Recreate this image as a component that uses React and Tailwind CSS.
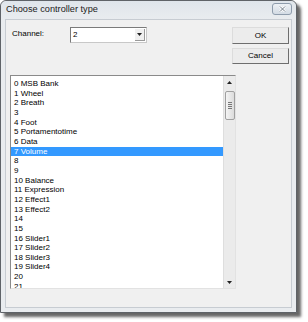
import React from "react";

const items = [
  "0 MSB Bank", "1 Wheel", "2 Breath", "3", "4 Foot", "5 Portamentotime", "6 Data",
  "7 Volume", "8", "9", "10 Balance", "11 Expression", "12 Effect1", "13 Effect2",
  "14", "15", "16 Slider1", "17 Slider2", "18 Slider3", "19 Slider4", "20", "21",
];

function Arrow({ up }) {
  return (
    <svg width="5" height="3" viewBox="0 0 5 3">
      <path d={up ? "M2.5 0 L5 3 L0 3 Z" : "M0 0 L5 0 L2.5 3 Z"} fill="#222" />
    </svg>
  );
}

export default function App() {
  const selected = 7;

  return (
    <div className="w-[308px] h-[322px] bg-white font-['Liberation_Sans',Arial,sans-serif] text-black">
      <div className="w-[297px] h-[313px] flex flex-col rounded-t-[6px] border border-[#5f6368] bg-[#e9ecef] shadow-[4px_4px_3px_rgba(0,0,0,0.6)]">
        {/* title bar */}
        <div className="h-[18px] flex items-center justify-between pl-[5px] pr-[4px] bg-gradient-to-b from-[#dfe5eb] to-[#e9ecef] rounded-t-[6px]">
          <span className="text-[9.2px] text-[#222] leading-none">Choose controller type</span>
          <div className="w-[20px] h-[12px] mt-[-2px] flex items-center justify-center rounded-[3px] border border-[#8e9cac] bg-gradient-to-b from-[#edf1f5] to-[#d3dbe4]">
            <svg width="7" height="6" viewBox="0 0 7 6">
              <path d="M1 0.5 L6 5.5 M6 0.5 L1 5.5" stroke="#fff" strokeWidth="2.4" />
              <path d="M1 0.5 L6 5.5 M6 0.5 L1 5.5" stroke="#6f7a86" strokeWidth="1" />
            </svg>
          </div>
        </div>

        {/* body */}
        <div className="flex-1 mx-[4px] mb-[4px] border border-[#c7ccd2] bg-[#f0f0f0] pt-[7px] pl-[4px] pr-[2px] flex flex-col">
          <div className="flex items-start">
            <div className="w-[60px] pl-[2px] pt-[2px] text-[8px] leading-[10px]">Channel:</div>
            <div className="w-[77px] h-[16px] flex items-center border border-[#7a7a7a] border-r-[#c8c8c8] border-b-[#c8c8c8] bg-white">
              <span className="flex-1 pl-[2px] text-[8px] leading-none">2</span>
              <div className="w-[10px] h-[12px] mr-[1px] flex items-center justify-center bg-[#f0f0f0] border-r border-b border-[#9a9a9a]">
                <Arrow />
              </div>
            </div>
            <div className="flex-1" />
            <div className="w-[57px] flex flex-col gap-[4px]">
              <div className="h-[17px] flex items-center justify-center border border-[#dcdcdc] border-r-[#6e6e6e] border-b-[#6e6e6e] bg-[#ececec] text-[8px]">OK</div>
              <div className="h-[16px] flex items-center justify-center border border-[#dcdcdc] border-r-[#6e6e6e] border-b-[#6e6e6e] bg-[#ececec] text-[8px]">Cancel</div>
            </div>
          </div>

          <div className="mt-[11px] w-[226px] h-[214px] flex border border-[#8a8a8a] border-r-[#e2e2e2] border-b-[#e2e2e2] bg-white">
            <div className="flex-1 overflow-hidden pt-[3px]">
              {items.map((t, i) => (
                <div
                  key={t}
                  className={
                    i === selected
                      ? "h-[9.67px] pl-[3px] text-[8px] leading-[9.67px] whitespace-nowrap bg-[#3399ff] text-white"
                      : "h-[9.67px] pl-[3px] text-[8px] leading-[9.67px] whitespace-nowrap"
                  }
                >
                  {t}
                </div>
              ))}
            </div>
            {/* scrollbar */}
            <div className="w-[12px] flex flex-col items-center bg-[#ebebeb] border-l border-[#dedede]">
              <div className="h-[12px] flex items-center justify-center">
                <Arrow up />
              </div>
              <div className="mt-[3px] w-[10px] h-[29px] flex flex-col items-center justify-center gap-[1px] rounded-[2px] border border-[#a0a0a0] bg-gradient-to-r from-[#f4f4f4] to-[#dcdcdc]">
                <div className="w-[4px] h-px bg-[#777]" />
                <div className="w-[4px] h-px bg-[#777]" />
                <div className="w-[4px] h-px bg-[#777]" />
                <div className="w-[4px] h-px bg-[#777]" />
              </div>
              <div className="flex-1" />
              <div className="h-[12px] flex items-center justify-center">
                <Arrow />
              </div>
            </div>
          </div>
        </div>
      </div>
    </div>
  );
}
